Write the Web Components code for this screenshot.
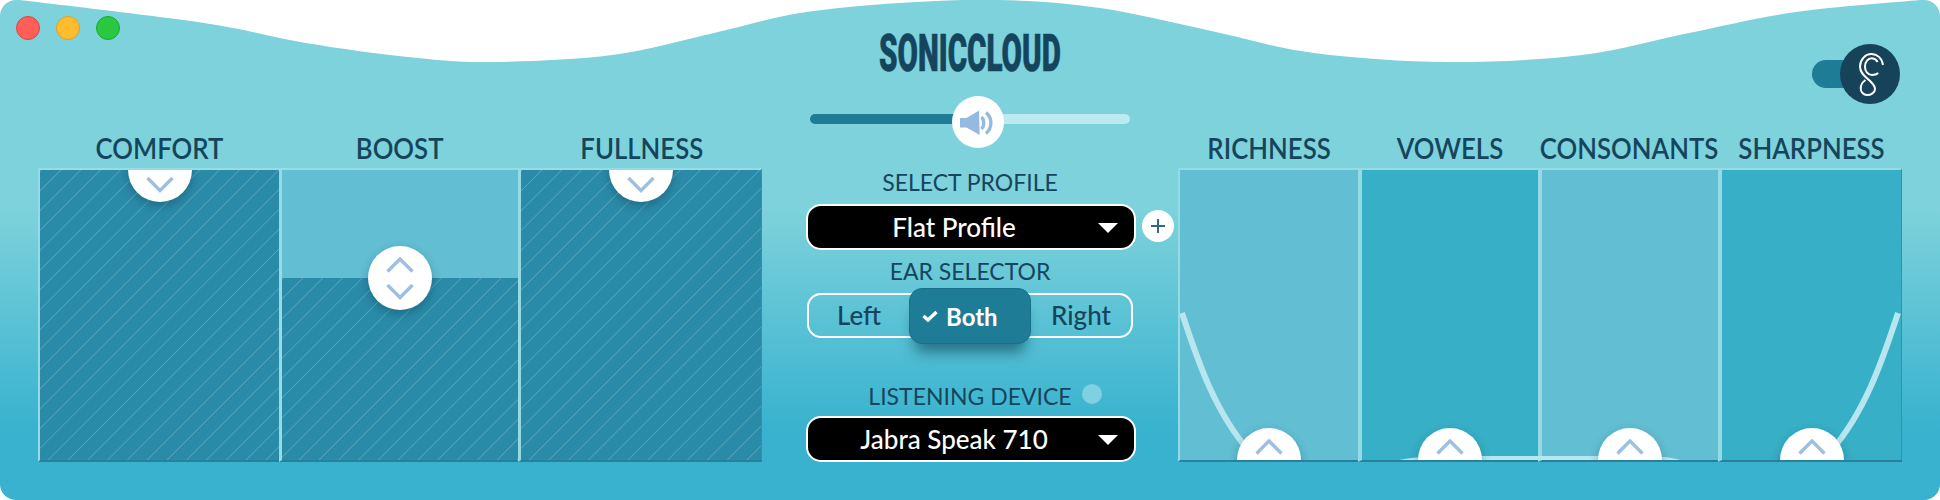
<!DOCTYPE html>
<html lang="en">
<head>
<meta charset="utf-8">
<title>SonicCloud</title>
<style>
	html, body { margin: 0; background: #fff; }
	body { width: 1940px; height: 500px; overflow: hidden; font-family: Lato, "Liberation Sans", sans-serif; }
</style>
</head>
<body>
<sc-window>
	<sc-panel slot="left" columns="241px 239px 244px">
		<sc-band label="COMFORT" fill="100" handle="down"></sc-band>
		<sc-band label="BOOST" fill="62.8" handle="both"></sc-band>
		<sc-band label="FULLNESS" fill="100" handle="down"></sc-band>
	</sc-panel>

	<sc-logo>SONICCLOUD</sc-logo>
	<sc-volume></sc-volume>
	<sc-field label="SELECT PROFILE" style="margin-top:20px">
		<sc-select extra>Flat Profile</sc-select>
	</sc-field>
	<sc-field label="EAR SELECTOR" style="margin-top:7px">
		<sc-segments></sc-segments>
	</sc-field>
	<sc-field label="LISTENING DEVICE" dot style="margin-top:44px;--gap:6px">
		<sc-select>Jabra Speak 710</sc-select>
	</sc-field>

	<sc-toggle slot="right"></sc-toggle>
	<sc-panel slot="right" columns="180px 180px 180px 184px" curve>
		<sc-band label="RICHNESS" tone="light" handle="up"></sc-band>
		<sc-band label="VOWELS" tone="deep" handle="up"></sc-band>
		<sc-band label="CONSONANTS" tone="light" handle="up"></sc-band>
		<sc-band label="SHARPNESS" tone="deep" handle="up"></sc-band>
	</sc-panel>
</sc-window>

<script>
// top edge of the window, left to right
const wavePoints = [[20,0],[204,23],[306,43],[408,57],[490,62],[612,55],[714,33],[800,13],[900,3],[1000,0],[1100,8],[1207,30],[1314,53],[1448,62],[1582,55],[1689,33],[1796,12],[1920,0]]

function wavePath(pts) {
	let d = `M0 0 H1940 V0 H${pts[pts.length - 1][0]} L${pts[pts.length - 1].join(' ')}`
	for (let i = pts.length - 1; i > 0; i--) {
		const p0 = pts[Math.min(i + 1, pts.length - 1)]
		const p1 = pts[i]
		const p2 = pts[i - 1]
		const p3 = pts[Math.max(i - 2, 0)]
		const c1 = [p1[0] + (p2[0] - p0[0]) / 6, p1[1] + (p2[1] - p0[1]) / 6]
		const c2 = [p2[0] - (p3[0] - p1[0]) / 6, p2[1] - (p3[1] - p1[1]) / 6]
		d += ` C${c1.join(' ')} ${c2.join(' ')} ${p2.join(' ')}`
	}
	return d + ' Z'
}

class ScWindow extends HTMLElement {
	constructor() {
		super()
		this.attachShadow({ mode: 'open' })
		this.shadowRoot.innerHTML = `
			<style>
				:host {
					display: block;
					position: relative;
					width: 1940px;
					height: 500px;
					overflow: hidden;
					border-radius: 16px;
					color: #15455c;
					background: linear-gradient(180deg, #7dd2db 0, #7dd2db 210px, #38b2cf 430px, #38b2cf 100%);
				}
				.wave { position: absolute; left: 0; top: 0; }
				.lights { position: absolute; left: 16px; top: 16px; display: flex; gap: 16px; }
				.lights i { width: 24px; height: 24px; border-radius: 50%; box-sizing: border-box; border: 1px solid; }
				.layout {
					position: relative;
					display: grid;
					grid-template-columns: 724px 416px 724px;
					height: 500px;
					box-sizing: border-box;
					padding: 0 38px;
				}
				.side { display: flex; flex-direction: column; justify-content: flex-end; padding-bottom: 38px; }
				.middle { display: flex; flex-direction: column; align-items: center; padding-top: 32px; }
			</style>
			<svg class="wave" width="1940" height="70" viewBox="0 0 1940 70">
				<path fill="#fff" d="${wavePath(wavePoints)}"/>
			</svg>
			<div class="lights">
				<i style="background:#ff5f57;border-color:#e0443e"></i>
				<i style="background:#febc2e;border-color:#dea123"></i>
				<i style="background:#28c840;border-color:#1aab29"></i>
			</div>
			<div class="layout">
				<div class="side"><slot name="left"></slot></div>
				<div class="middle"><slot></slot></div>
				<div class="side"><slot name="right"></slot></div>
			</div>
		`
	}
}
customElements.define('sc-window', ScWindow)

class ScPanel extends HTMLElement {
	constructor() {
		super()
		this.attachShadow({ mode: 'open' })
	}

	connectedCallback() {
		this.shadowRoot.innerHTML = `
			<style>
				:host { display: block; position: relative; }
				.row { display: grid; grid-template-columns: ${this.getAttribute('columns')}; }
				svg { position: absolute; left: 0; bottom: 0; z-index: 1; pointer-events: none; }
			</style>
			<div class="row"><slot></slot></div>
			${this.hasAttribute('curve') ? `<svg width="724" height="160" viewBox="0 0 724 160">
				<path fill="none" stroke="#b7e6ee" stroke-width="6" d="M4 11 C20 60 38 112 72 150"/>
				<path fill="none" stroke="#b7e6ee" stroke-width="6" d="M720 11 C704 60 686 112 652 150"/>
				<path fill="#b7e6ee" d="M221 158 Q240 154 270 154 H460 Q490 154 502 158 Z"/>
			</svg>` : ''}
		`
	}
}
customElements.define('sc-panel', ScPanel)

class ScBand extends HTMLElement {
	constructor() {
		super()
		this.attachShadow({ mode: 'open' })
	}

	connectedCallback() {
		const label = this.getAttribute('label')
		const handle = this.getAttribute('handle')
		const tone = this.getAttribute('tone')
		const fill = this.getAttribute('fill')
		const up = '<path d="M1.5 14.5 L14 2 L26.5 14.5"/>'
		const down = '<path d="M1.5 2 L14 14.5 L26.5 2"/>'
		let handleHtml = ''
		if (handle === 'down') {
			handleHtml = `<div class="knob" style="top:-32px"><svg style="top:38px" width="28" height="17" viewBox="0 0 28 17">${down}</svg></div>`
		} else if (handle === 'up') {
			handleHtml = `<div class="knob" style="bottom:-32px"><svg style="top:11px" width="28" height="17" viewBox="0 0 28 17">${up}</svg></div>`
		} else if (handle === 'both') {
			handleHtml = `<div class="knob" style="top:76px"><svg style="top:11px" width="28" height="17" viewBox="0 0 28 17">${up}</svg><svg style="top:37px" width="28" height="17" viewBox="0 0 28 17">${down}</svg></div>`
		}
		this.shadowRoot.innerHTML = `
			<style>
				:host { display: block; min-width: 0; }
				h2 {
					display: flex;
					justify-content: center;
					margin: 0;
					height: 40px;
					padding-left: 3px;
					font: 600 28px/40px Lato, "Liberation Sans", sans-serif;
					color: #15455c;
					white-space: nowrap;
				}
				h2 span { flex: none; transform: scaleX(.92); }
				.body {
					position: relative;
					height: 294px;
					box-sizing: border-box;
					overflow: hidden;
					border-top: 2px solid #96dbe6;
					border-bottom: 2px solid #2a7f9a;
					border-left: ${tone ? 4 : 3}px solid #94dbe6;
					background: var(--bg);
				}
				:host(:first-child) .body { border-left-width: 2px; }
				:host(:last-child) .body { border-right: 1px solid #3c8ea6; }
				.hatch {
					position: absolute;
					left: 0; right: 0; bottom: 0;
					background:
						repeating-linear-gradient(135deg, transparent 0, rgba(255,255,255,.22) .8px, transparent 1.6px, transparent 14px),
						#2a8ba8;
				}
				.knob {
					position: absolute;
					left: calc(50% - 32px);
					width: 64px;
					height: 64px;
					border-radius: 50%;
					background: #fff;
					box-shadow: 0 4px 10px rgba(0,40,60,.3);
					z-index: 2;
				}
				.knob svg { position: absolute; left: 18px; fill: none; stroke: #9dbfe0; stroke-width: 3.4; }
			</style>
			<h2><span>${label}</span></h2>
			<div class="body" style="--bg:${tone === 'deep' ? '#37afc6' : '#62bed3'}">
				${fill ? `<div class="hatch" style="height:${fill}%"></div>` : ''}
				${handleHtml}
			</div>
		`
	}
}
customElements.define('sc-band', ScBand)

class ScLogo extends HTMLElement {
	constructor() {
		super()
		this.attachShadow({ mode: 'open' })
		this.shadowRoot.innerHTML = `
			<style>
				:host { display: block; height: 44px; width: 182px; color: #15455c; }
				span {
					display: inline-block;
					font: 900 51px/44px Roboto, "Liberation Sans", sans-serif;
					-webkit-text-stroke: .6px #15455c;
					white-space: nowrap;
					transform-origin: 0 50%;
					transform: scaleX(0.58);
				}
			</style>
			<span><slot></slot></span>
		`
	}
}
customElements.define('sc-logo', ScLogo)

class ScVolume extends HTMLElement {
	constructor() {
		super()
		this.attachShadow({ mode: 'open' })
		this.shadowRoot.innerHTML = `
			<style>
				:host { display: block; position: relative; width: 320px; height: 52px; margin-top: 20px; }
				.track { position: absolute; left: 0; right: 0; top: 18px; height: 10px; border-radius: 5px; background: linear-gradient(90deg, #1f7c96 0 168px, #bde9f0 168px); }
				.thumb { position: absolute; left: 142px; top: 0; width: 52px; height: 52px; border-radius: 50%; background: #fff; }
				svg { display: block; }
			</style>
			<div class="track"></div>
			<div class="thumb">
				<svg width="52" height="52" viewBox="0 0 52 52">
					<path fill="#94bbdf" d="M8 22 L14.5 22 L27 14.5 L27.7 39 L14.5 31.5 L8 31.5 Z"/>
					<path fill="none" stroke="#94bbdf" stroke-width="3.4" d="M29.5 21 C32.5 24 32.5 30 29.5 33"/>
					<path fill="none" stroke="#94bbdf" stroke-width="3.4" d="M34 16.5 C40.5 22 40.5 32 34 37.5"/>
				</svg>
			</div>
		`
	}
}
customElements.define('sc-volume', ScVolume)

class ScField extends HTMLElement {
	constructor() {
		super()
		this.attachShadow({ mode: 'open' })
	}

	connectedCallback() {
		this.shadowRoot.innerHTML = `
			<style>
				:host { display: flex; flex-direction: column; align-items: center; width: 330px; }
				.label { position: relative; font: 400 23px/28px Lato, "Liberation Sans", sans-serif; color: #15455c; height: 28px; white-space: nowrap; margin-bottom: var(--gap, 8px); }
				.dot { position: absolute; left: calc(100% + 10px); top: 2px; width: 20px; height: 20px; border-radius: 50%; background: #7fd0e1; }
			</style>
			<div class="label">${this.getAttribute('label')}${this.hasAttribute('dot') ? '<span class="dot"></span>' : ''}</div>
			<slot></slot>
		`
	}
}
customElements.define('sc-field', ScField)

class ScSelect extends HTMLElement {
	constructor() {
		super()
		this.attachShadow({ mode: 'open' })
	}

	connectedCallback() {
		this.shadowRoot.innerHTML = `
			<style>
				:host { display: block; position: relative; width: 330px; margin-left: 2px; }
				.box {
					box-sizing: border-box;
					height: 46px;
					border: 2px solid #fff;
					border-radius: 15px;
					background: #000;
					color: #fff;
					font: 500 26px/42px Lato, "Liberation Sans", sans-serif;
					text-align: center;
					padding-right: 34px;
				}
				.arrow {
					position: absolute; right: 18px; top: 19px;
					border-left: 10px solid transparent; border-right: 10px solid transparent; border-top: 10px solid #fff;
				}
				.plus {
					position: absolute; left: calc(100% + 6px); top: 6px;
					width: 32px; height: 32px; border-radius: 50%; background: #fff;
				}
				.plus svg { display: block; }
			</style>
			<div class="box"><slot></slot></div>
			<span class="arrow"></span>
			${this.hasAttribute('extra') ? `<span class="plus"><svg width="32" height="32" viewBox="0 0 32 32"><path d="M9 16 H23 M16 9 V23" stroke="#2d6a84" stroke-width="2" fill="none"/></svg></span>` : ''}
		`
	}
}
customElements.define('sc-select', ScSelect)

class ScSegments extends HTMLElement {
	constructor() {
		super()
		this.attachShadow({ mode: 'open' })
		this.shadowRoot.innerHTML = `
			<style>
				:host { display: block; position: relative; width: 326px; height: 45px; box-sizing: border-box; border: 2px solid #fff; border-radius: 14px; }
				.row { display: grid; grid-template-columns: 100px 122px 1fr; height: 41px; font: 500 26px/41px Lato, "Liberation Sans", sans-serif; color: #15455c; text-align: center; }
				.both {
					position: relative;
					margin: -7px 0 -5px;
					height: 56px;
					box-sizing: border-box;
					border: 1px solid #19708a;
					border-radius: 13px;
					background: #1f7c96;
					color: #fff;
					font-size: 24px;
					font-weight: 700;
					box-shadow: 0 14px 14px -6px rgba(15,70,90,.65);
					display: flex; align-items: center; padding-left: 12px; gap: 8px;
				}
				.both svg { display: block; }
			</style>
			<div class="row">
				<span>Left</span>
				<span class="both"><svg width="16" height="12" viewBox="0 0 16 12"><path d="M1.5 6 L6 10 L14.5 2" fill="none" stroke="#fff" stroke-width="3.4"/></svg>Both</span>
				<span>Right</span>
			</div>
		`
	}
}
customElements.define('sc-segments', ScSegments)

class ScToggle extends HTMLElement {
	constructor() {
		super()
		this.attachShadow({ mode: 'open' })
		this.shadowRoot.innerHTML = `
			<style>
				:host { display: flex; align-items: center; align-self: flex-end; margin: 0 2px 24px 0; width: 88px; height: 60px; }
				.track { width: 48px; height: 28px; border-radius: 14px 0 0 14px; background: #1f7c96; margin-right: -20px; flex: none; }
				.knob { width: 60px; height: 60px; border-radius: 50%; background: #17435a; position: relative; flex: none; }
				svg { display: block; }
			</style>
			<div class="track"></div>
			<div class="knob">
				<svg width="60" height="60" viewBox="0 0 60 60" fill="none" stroke="#fff" stroke-width="2">
					<path d="M43 21 C42 14 37 10 31.5 10 C25 10 20 16 20 22.7 C20 30 27 34 31 38 C33.5 40.5 35 42.5 35 45 C35 48.5 31 51 27 51 C23.5 51 20.7 48 20.7 44.5 C20.7 41 22.5 38 25.5 36"/>
					<path d="M37.7 18 C36 15.5 34 14.3 31.7 14.3 C28 14.3 25 18 25 22.7 C25 27.5 28 31 32 31 C34.5 31 36.5 30.5 38.3 29"/>
				</svg>
			</div>
		`
	}
}
customElements.define('sc-toggle', ScToggle)
</script>
</body>
</html>
